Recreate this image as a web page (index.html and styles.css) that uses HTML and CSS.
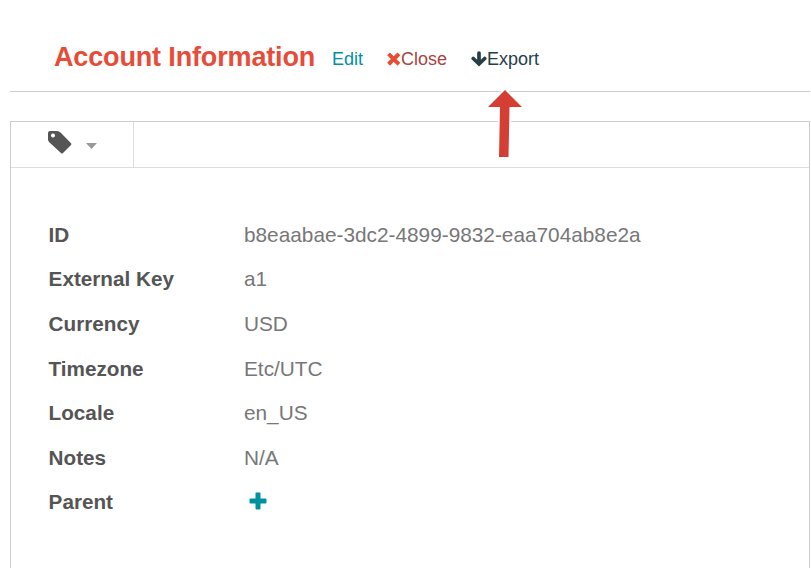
FILE: index.html
```html
<!DOCTYPE html>
<html lang="en"><head><meta charset="utf-8"><title>Account Information</title><link rel="stylesheet" href="styles.css"></head>
<body>
<header class="head">
<h1>Account Information</h1>
<a class="edit">Edit</a>
<a class="close"><svg width="14" height="14" viewBox="0 0 14 14"><path d="M3 3.300l7.500 7.500M10.500 3.300l-7.500 7.500" stroke="#e74c35" stroke-width="4" stroke-linecap="square"/></svg><span>Close</span></a>
<a class="export"><svg width="16" height="16" viewBox="0 0 16 16"><path d="M8 2v10M2.300 7.500L8 13 13.700 7.500" fill="none" stroke="#263e46" stroke-width="3.700" stroke-linecap="round"/></svg><span>Export</span></a>
</header>
<svg class="pointer" width="36" height="68" viewBox="0 0 36 68"><path d="M18 0L35 17H22.500L21.500 67H12L13 17H1z" fill="#d53e33" stroke="#fff" stroke-width="4" paint-order="stroke"/></svg>
<main class="panel">
<div class="bar"><div class="tag"><svg width="24" height="24" viewBox="0 0 24 24"><path fill-rule="evenodd" d="M0 3Q0 1 2 1H9Q11 1 12.500 2.500L22.800 13Q24 14 23 15L15 23Q14 24 13 23L1.500 12.500Q0 11 0 9.500zM5 3.500a2 2 0 1 0 .01 0z" fill="#555"/></svg><svg class="caret" width="11" height="6" viewBox="0 0 11 6"><path d="M0 0h11L5.500 6z" fill="#999"/></svg></div></div>
<dl>
<dt>ID</dt><dd>b8eaabae-3dc2-4899-9832-eaa704ab8e2a</dd>
<dt>External Key</dt><dd>a1</dd>
<dt>Currency</dt><dd>USD</dd>
<dt>Timezone</dt><dd>Etc/UTC</dd>
<dt>Locale</dt><dd>en_US</dd>
<dt>Notes</dt><dd>N/A</dd>
<dt>Parent</dt><dd><svg class="plus" width="18" height="18" viewBox="0 0 18 18"><path d="M7 .5h4q.5 0 .5.500v5.500h5q1 0 1 1v3q0 1-1 1h-5v5q0 1-1 1h-3q-1 0-1-1v-5h-5q-1 0-1-1v-3q0-1 1-1h5V1q0-.5.500-.5z" fill="#0091a0"/></svg></dd>
</dl>
</main>
</body></html>
```
FILE: styles.css
```css
*{box-sizing:border-box}
body{margin:0;height:568px;overflow:hidden;background:#fff;font-family:"Liberation Sans",Arial,sans-serif;color:#777}
.head{height:92px;margin:0 1px 0 10px;padding:36px 0 0 44px;border-bottom:1px solid #ccc;display:flex;align-items:flex-start}
h1{margin:0 17px 0 0;font-size:27px;letter-spacing:-.15px;line-height:42px;color:#e74c38;white-space:nowrap;width:261px}
.head a{font-size:18px;line-height:46px;display:flex;align-items:center}
.edit{color:#0091a0;width:55px}
.close{color:#a94442;width:84px}
.export{color:#263e46}
.pointer{position:absolute;left:487px;top:90px}
.panel{margin:29px 1px 0 10px;height:460px;border:1px solid #ccc}
.bar{height:46px;border-bottom:1px solid #ddd}
.tag{width:123px;height:46px;border-right:1px solid #ddd;padding:8px 0 0 37px;display:flex}
.caret{margin:13px 0 0 14px}
dl{margin:45px 0 0 37.600px;display:grid;grid-template-columns:195.400px 1fr;grid-template-rows:44px 45px 45px 44px 45px 44px 44px;font-size:20.800px;line-height:44px}
dt{font-weight:bold;color:#555;font-size:20.700px}
dd{margin:0}
.plus{margin-left:5px;vertical-align:-1px}
```
